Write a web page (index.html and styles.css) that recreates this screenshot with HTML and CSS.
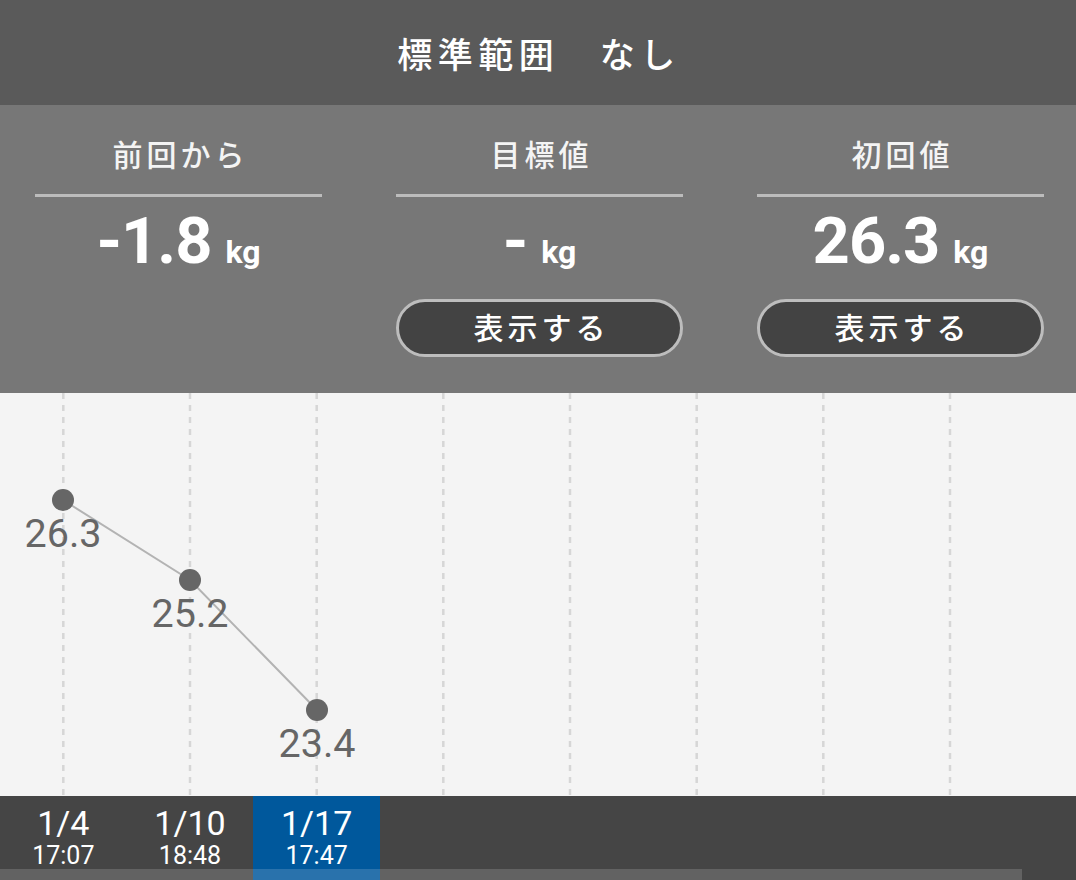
FILE: index.html
```html
<!DOCTYPE html>
<html lang="ja">
<head>
<meta charset="utf-8">
<title>標準範囲</title>
<link rel="stylesheet" href="styles.css">
</head>
<body>
<div class="app">
  <header class="header"><h1 class="title">標準範囲　なし</h1></header>
  <section class="stats">
    <div class="stat">
      <div class="stat-label">前回から</div>
      <div class="stat-rule"></div>
      <div class="stat-value"><span class="num">-1.8</span><span class="unit">kg</span></div>
    </div>
    <div class="stat">
      <div class="stat-label">目標値</div>
      <div class="stat-rule"></div>
      <div class="stat-value"><span class="num">-</span><span class="unit">kg</span></div>
      <button class="show-btn">表示する</button>
    </div>
    <div class="stat">
      <div class="stat-label">初回値</div>
      <div class="stat-rule"></div>
      <div class="stat-value"><span class="num">26.3</span><span class="unit">kg</span></div>
      <button class="show-btn">表示する</button>
    </div>
  </section>
  <section class="chart">
    <svg class="chart-svg" width="1076" height="403" viewBox="0 0 1076 403">
      <g class="grid">
        <line x1="63.3" y1="0" x2="63.3" y2="403"/>
        <line x1="190" y1="0" x2="190" y2="403"/>
        <line x1="316.7" y1="0" x2="316.7" y2="403"/>
        <line x1="443.3" y1="0" x2="443.3" y2="403"/>
        <line x1="570" y1="0" x2="570" y2="403"/>
        <line x1="696.7" y1="0" x2="696.7" y2="403"/>
        <line x1="823.3" y1="0" x2="823.3" y2="403"/>
        <line x1="950" y1="0" x2="950" y2="403"/>
      </g>
      <polyline class="trend" points="63,107 190,187 317,317"/>
      <circle class="pt" cx="63" cy="107" r="11"/>
      <circle class="pt" cx="190" cy="187" r="11"/>
      <circle class="pt" cx="317" cy="317" r="11"/>
      <text class="pt-label" x="63" y="154">26.3</text>
      <text class="pt-label" x="190" y="234">25.2</text>
      <text class="pt-label" x="317" y="364">23.4</text>
    </svg>
  </section>
  <footer class="dates">
    <div class="date"><span class="d">1/4</span><span class="t">17:07</span></div>
    <div class="date"><span class="d">1/10</span><span class="t">18:48</span></div>
    <div class="date active"><span class="d">1/17</span><span class="t">17:47</span></div>
    <div class="scrollbar"></div>
  </footer>
</div>
</body>
</html>
```
FILE: styles.css
```css
* { box-sizing: border-box; }
html, body { margin: 0; padding: 0; }
body {
  width: 1076px;
  height: 880px;
  overflow: hidden;
  background: #454545;
  font-family: Roboto, "Noto Sans CJK JP", sans-serif;
}
.app { width: 1076px; height: 880px; display: flex; flex-direction: column; }

.header {
  height: 105px;
  background: #5a5a5a;
  display: flex;
  align-items: center;
  justify-content: center;
}
.title {
  margin: 0;
  font-family: "Noto Sans CJK JP", sans-serif;
  font-weight: 500;
  font-size: 35px;
  line-height: 40px;
  letter-spacing: 5.5px;
  color: #ffffff;
  padding-left: 2px;
}

.stats {
  height: 288px;
  background: #777777;
  display: grid;
  grid-template-columns: 287px 287px 287px;
  column-gap: 74px;
  padding: 28px 0 0 35px;
  align-items: start;
}
.stat { display: flex; flex-direction: column; align-items: stretch; }
.stat-label {
  height: 40px;
  line-height: 40px;
  text-align: center;
  font-family: "Noto Sans CJK JP", sans-serif;
  font-weight: 500;
  font-size: 30px;
  letter-spacing: 4px;
  padding-left: 4px;
  color: #f4f4f4;
}
.stat-rule {
  margin-top: 21px;
  height: 3px;
  background: #bcbcbc;
}
.stat-value {
  margin-top: 9px;
  height: 70px;
  display: flex;
  justify-content: center;
  align-items: baseline;
  color: #ffffff;
  font-weight: 700;
}
.num { font-size: 65px; line-height: 70px; letter-spacing: -1px; }
.unit { font-size: 32px; line-height: 70px; margin-left: 14px; }

.show-btn {
  margin-top: 23px;
  height: 58px;
  width: 287px;
  border: 3px solid #bdbdbd;
  border-radius: 29px;
  background: #434343;
  color: #ffffff;
  font-family: "Noto Sans CJK JP", sans-serif;
  font-weight: 500;
  font-size: 30px;
  letter-spacing: 4px;
  padding: 0 0 4px 4px;
  line-height: 48px;
}

.chart {
  height: 403px;
  background: #f4f4f4;
}
.chart-svg { display: block; }
.grid line {
  stroke: #d6d6d6;
  stroke-width: 2.5;
  stroke-dasharray: 6 6;
}
.trend { fill: none; stroke: #b3b3b3; stroke-width: 2; }
.pt { fill: #666666; }
.pt-label {
  font-family: Roboto, sans-serif;
  font-size: 39.5px;
  fill: #666666;
  text-anchor: middle;
}

.dates {
  position: relative;
  height: 84px;
  background: #454545;
  display: grid;
  grid-template-columns: repeat(3, 126.67px);
}
.date {
  display: flex;
  flex-direction: column;
  align-items: center;
  color: #ffffff;
  font-family: Roboto, sans-serif;
}
.date.active { background: #00589c; }
.d { font-size: 34px; line-height: 34px; margin-top: 10px; }
.t { font-size: 25px; line-height: 28px; margin-top: 2px; }
.scrollbar {
  position: absolute;
  left: 0;
  bottom: 0;
  width: 1022px;
  height: 11px;
  background: rgba(255, 255, 255, 0.16);
}
```
